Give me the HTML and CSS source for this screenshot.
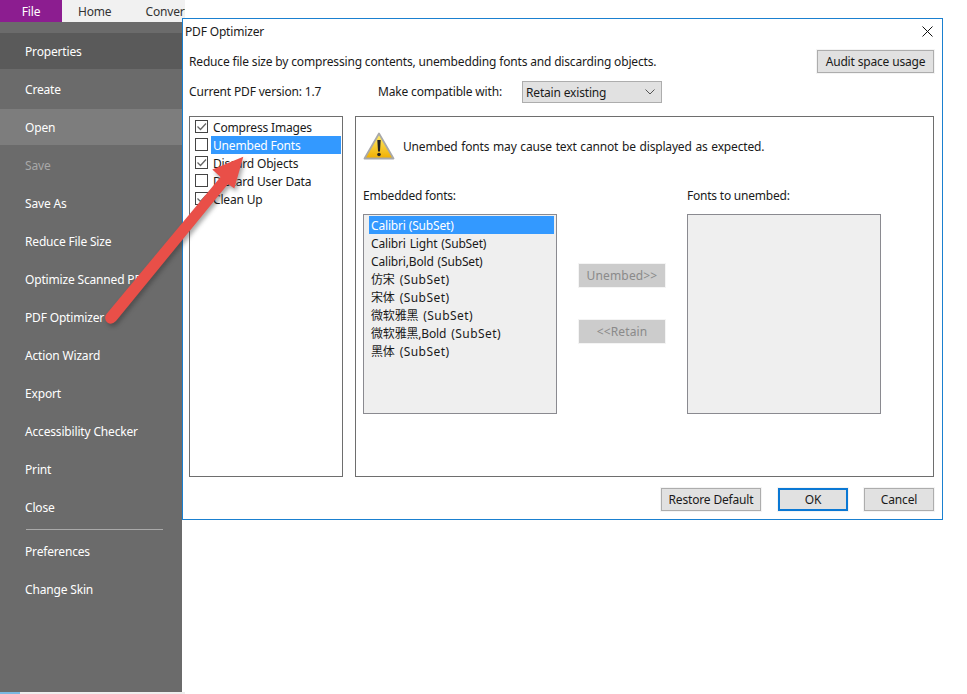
FILE: index.html
```html
<!DOCTYPE html>
<html lang="en">
<head>
<meta charset="utf-8">
<title>PDF Optimizer</title>
<link rel="stylesheet" href="styles.css">
</head>
<body>
<div class="app">
  <div class="tabs">
    <div class="tab tab-file">File</div>
    <div class="tab tab-home">Home</div>
    <div class="tab tab-convert">Convert</div>
  </div>
  <nav class="side">
    <div class="item item-dark">Properties</div>
    <div class="item">Create</div>
    <div class="item item-light">Open</div>
    <div class="item item-off">Save</div>
    <div class="item">Save As</div>
    <div class="item">Reduce File Size</div>
    <div class="item">Optimize Scanned PDF</div>
    <div class="item">PDF Optimizer</div>
    <div class="item">Action Wizard</div>
    <div class="item">Export</div>
    <div class="item">Accessibility Checker</div>
    <div class="item">Print</div>
    <div class="item">Close</div>
    <div class="side-rule"></div>
    <div class="item">Preferences</div>
    <div class="item">Change Skin</div>
  </nav>
  <div class="strip"><div class="strip-blue"></div></div>
</div>

<section class="dialog">
  <header class="title-row">
    <span>PDF Optimizer</span>
    <svg class="close" width="11" height="11" viewBox="0 0 11 11"><path d="M.5.5l10 10M10.500.5l-10 10" stroke="#111" stroke-width="1" fill="none"/></svg>
  </header>
  <div class="desc-row">
    <span class="desc">Reduce file size by compressing contents, unembedding fonts and discarding objects.</span>
    <button class="btn btn-audit">Audit space usage</button>
  </div>
  <div class="version-row">
    <span class="version">Current PDF version: 1.7</span>
    <span class="compat">Make compatible with:</span>
    <div class="select">
      <span class="select-text">Retain existing</span>
      <svg width="10" height="6" viewBox="0 0 10 6"><path d="M.5.5L5 5 9.500.5" stroke="#555" fill="none"/></svg>
    </div>
  </div>
  <div class="main">
    <div class="checklist">
      <div class="check-row"><span class="box"><svg width="13" height="13" viewBox="0 0 13 13"><path d="M2.500 6.500l3 3 5.500-6" stroke="#666" stroke-width="1.300" fill="none"/></svg></span><span class="label">Compress Images</span></div>
      <div class="check-row"><span class="box"></span><span class="label label-on">Unembed Fonts</span></div>
      <div class="check-row"><span class="box"><svg width="13" height="13" viewBox="0 0 13 13"><path d="M2.500 6.500l3 3 5.500-6" stroke="#666" stroke-width="1.300" fill="none"/></svg></span><span class="label">Discard Objects</span></div>
      <div class="check-row"><span class="box"></span><span class="label">Discard User Data</span></div>
      <div class="check-row"><span class="box"><svg width="13" height="13" viewBox="0 0 13 13"><path d="M2.500 6.500l3 3 5.500-6" stroke="#666" stroke-width="1.300" fill="none"/></svg></span><span class="label">Clean Up</span></div>
    </div>
    <div class="panel">
      <div class="warn">
        <svg width="32" height="28" viewBox="0 0 32 28">
          <defs><linearGradient id="amber" x1="0" y1="0" x2="0" y2="1"><stop offset="0" stop-color="#ffee70"/><stop offset="1" stop-color="#f0ae00"/></linearGradient></defs>
          <path d="M16 1.500L30.500 26.500H1.500Z" fill="url(#amber)" stroke="#a8a8a8" stroke-width="1.800" stroke-linejoin="round"/>
          <path d="M14.300 8h3.400l-.7 11.500h-2Z" fill="#222"/>
          <circle cx="16" cy="22.500" r="1.800" fill="#222"/>
        </svg>
        <span class="warn-text">Unembed fonts may cause text cannot be displayed as expected.</span>
      </div>
      <div class="fonts">
        <div class="col">
          <div class="col-title">Embedded fonts:</div>
          <div class="listbox">
            <div class="font-row font-on">Calibri (SubSet)</div>
            <div class="font-row font-latin">Calibri Light (SubSet)</div>
            <div class="font-row font-latin">Calibri,Bold (SubSet)</div>
            <div class="font-row">仿宋 <span class="subset">(SubSet)</span></div>
            <div class="font-row">宋体 <span class="subset">(SubSet)</span></div>
            <div class="font-row">微软雅黑 <span class="subset">(SubSet)</span></div>
            <div class="font-row">微软雅黑,Bold <span class="subset">(SubSet)</span></div>
            <div class="font-row">黑体 <span class="subset">(SubSet)</span></div>
          </div>
        </div>
        <div class="moves">
          <button class="btn btn-off">Unembed&gt;&gt;</button>
          <button class="btn btn-off">&lt;&lt;Retain</button>
        </div>
        <div class="col">
          <div class="col-title">Fonts to unembed:</div>
          <div class="listbox"></div>
        </div>
      </div>
    </div>
  </div>
  <footer class="foot">
    <button class="btn btn-restore">Restore Default</button>
    <button class="btn btn-ok">OK</button>
    <button class="btn btn-cancel">Cancel</button>
  </footer>
</section>

<svg class="arrow" width="967" height="694" viewBox="0 0 967 694">
  <path d="M243.300 156.700L212.300 169.500L220.500 177L106.500 314Q103 319 108 323Q112 325 116 321L228 184L234.300 188.500Z" fill="#e94f48"/>
</svg>
</body>
</html>
```

FILE: styles.css
```css
* { box-sizing: border-box; }
html, body { margin: 0; height: 100%; background: #fff; overflow: hidden; }
body { font: 12px/16px "Noto Sans", sans-serif; letter-spacing: -.17px; color: #1a1a1a; }

.app { width: 185px; height: 694px; display: flex; flex-direction: column; }
.tabs { height: 22px; background: #f1f1f1; display: flex; flex: none; overflow: hidden; }
.tab { line-height: 23px; color: #333; flex: none; }
.tab-file { width: 62px; background: #8c1d90; color: #fff; text-align: center; }
.tab-home { margin-left: 16px; }
.tab-convert { margin-left: 34px; }

.side { width: 182px; flex: 1; background: #6b6b6b; padding-top: 11px; color: #fff; }
.item { height: 38px; line-height: 37px; padding-left: 25px; white-space: nowrap; overflow: hidden; }
.item-dark { background: #5a5a5a; height: 36px; margin-bottom: 2px; }
.item-light { background: #7d7d7d; height: 36px; margin-bottom: 2px; }
.item-off { color: #a8a8a8; }
.side-rule { height: 1px; background: #a9a9a9; margin: 2px 19px 3px 26px; }

.strip { height: 2px; background: #eee; flex: none; }
.strip-blue { width: 20px; height: 2px; background: #7ab8e2; }

.dialog {
  position: absolute; left: 182px; top: 18px; width: 761px; height: 502px;
  background: #fff; border: 1px solid #1a80d0; display: flex; flex-direction: column;
  padding: 0 8px 0 6px;
}
.title-row { height: 24px; display: flex; align-items: center; justify-content: space-between; margin-left: -4px; padding-top: 1px; flex: none; }
.close { margin-right: 1px; }
.desc-row { display: flex; justify-content: space-between; align-items: center; height: 23px; margin-top: 7px; flex: none; }
.desc { padding-top: 1px; }
.version-row { display: flex; align-items: center; height: 22px; margin-top: 8px; flex: none; }
.version { width: 189px; }
.compat { width: 144px; }
.select { width: 140px; height: 22px; background: #e1e1e1; border: 1px solid #adadad; display: flex; align-items: center; justify-content: space-between; padding: 0 3px; }
.select-text { padding-top: 1px; }
.select svg { margin-right: 3px; }

.btn { font: inherit; letter-spacing: inherit; color: #1a1a1a; background: #e1e1e1; border: 1px solid #adadad; box-shadow: 0 0 0 1px #f4f4f4; padding: 0; height: 23px; }
.btn-audit { width: 117px; }
.btn-off { width: 86px; background: #cccccc; border-color: #cccccc; color: #8a8a8a; letter-spacing: .15px; }
.btn-restore { width: 100px; }
.btn-ok { width: 70px; margin-left: 17px; border: 2px solid #0a78d4; }
.btn-cancel { width: 70px; margin-left: 16px; }

.main { display: flex; gap: 12px; height: 361px; margin-top: 13px; flex: none; }
.checklist { width: 154px; border: 1px solid #6e6e6e; padding: 1px 1px 0 5px; }
.check-row { display: flex; align-items: flex-start; height: 18px; }
.box { width: 13px; height: 13px; margin-top: 2px; border: 1px solid #444; flex: none; display: block; }
.box svg { display: block; margin: -1px; }
.label { flex: 1; height: 18px; line-height: 19px; margin-left: 3px; padding-left: 2px; }
.label-on { background: #3399ff; color: #fff; }

.panel { width: 579px; border: 1px solid #6e6e6e; padding: 0 7px; display: flex; flex-direction: column; }
.warn { display: flex; align-items: center; gap: 8px; height: 28px; margin-top: 15px; flex: none; }
.warn-text { padding-top: 1px; word-spacing: .8px; }
.fonts { display: flex; margin-top: 28px; }
.col { width: 194px; flex: none; }
.col-title { height: 16px; letter-spacing: -.22px; }
.listbox { height: 200px; margin-top: 10px; background: #efefef; border: 1px solid #8a8a90; padding: 1px 2px 0 5px; }
.font-row { height: 18px; line-height: 19px; padding-left: 2px; font-family: "Noto Sans", "Noto Sans CJK SC", sans-serif; color: #1a1a1a; white-space: nowrap; }
.font-latin { word-spacing: 1px; }
.subset { margin-left: 2px; letter-spacing: .45px; }
.font-on { background: #3399ff; color: #fff; }
.moves { width: 130px; display: flex; flex-direction: column; align-items: flex-start; gap: 33px; padding: 76px 0 0 22px; flex: none; }

.foot { display: flex; justify-content: flex-end; margin-top: 11px; flex: none; }

.arrow { position: absolute; left: 0; top: 0; pointer-events: none; filter: drop-shadow(2px 3px 2px rgba(40, 40, 40, .4)); }
```
